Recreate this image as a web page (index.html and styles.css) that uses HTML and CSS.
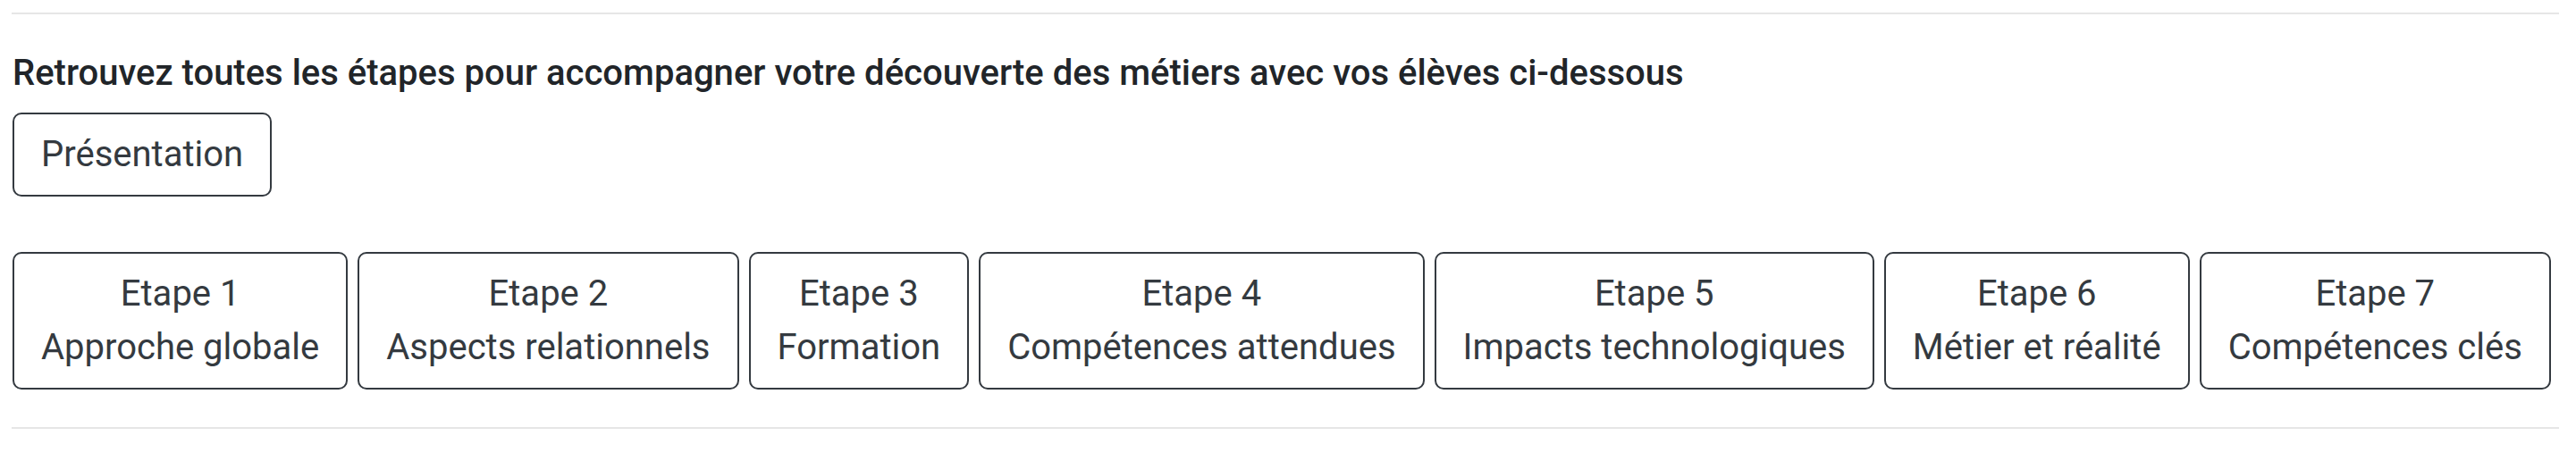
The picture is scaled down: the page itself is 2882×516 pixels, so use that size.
FILE: index.html
```html
<!DOCTYPE html>
<html lang="fr">
<head>
<meta charset="utf-8">
<title>Etapes</title>
<link rel="stylesheet" href="styles.css">
</head>
<body>
<div class="page">
  <hr class="rule rule-top">
  <h2 class="intro">Retrouvez toutes les étapes pour accompagner votre découverte des métiers avec vos élèves ci-dessous</h2>
  <div class="intro-actions">
    <a class="btn" href="#">Présentation</a>
  </div>
  <div class="steps">
    <a class="btn step" href="#">Etape 1<br>Approche globale</a>
    <a class="btn step" href="#">Etape 2<br>Aspects relationnels</a>
    <a class="btn step" href="#">Etape 3<br>Formation</a>
    <a class="btn step" href="#">Etape 4<br>Compétences attendues</a>
    <a class="btn step" href="#">Etape 5<br>Impacts technologiques</a>
    <a class="btn step" href="#">Etape 6<br>Métier et réalité</a>
    <a class="btn step" href="#">Etape 7<br>Compétences clés</a>
  </div>
  <hr class="rule rule-bottom">
</div>
</body>
</html>
```
FILE: styles.css
```css
html, body {
  margin: 0;
  padding: 0;
  background: #ffffff;
}

body {
  font-family: Roboto, "Liberation Sans", sans-serif;
  color: #212529;
}

.page {
  padding: 14px 19px 0 13px;
}

.rule {
  border: 0;
  border-top: 2px solid #e6e6e6;
  margin: 0;
}

.intro {
  margin: 42px 0 0 0;
  font-size: 40px;
  line-height: 48px;
  font-weight: 500;
  color: #212529;
  padding-left: 1px;
}

.intro-actions {
  margin-top: 20px;
  display: flex;
}

.btn {
  display: inline-block;
  box-sizing: border-box;
  border: 2px solid #343a40;
  border-radius: 10px;
  padding: 15px 30px;
  font-size: 40px;
  line-height: 60px;
  font-weight: 400;
  color: #343a40;
  text-decoration: none;
  text-align: center;
  background: #fff;
  white-space: nowrap;
}

.intro-actions .btn {
  margin-left: 1px;
}

.steps {
  margin-top: 62px;
  display: flex;
  gap: 11px;
  padding-left: 1px;
}

.rule-bottom {
  margin-top: 42px;
}
```
